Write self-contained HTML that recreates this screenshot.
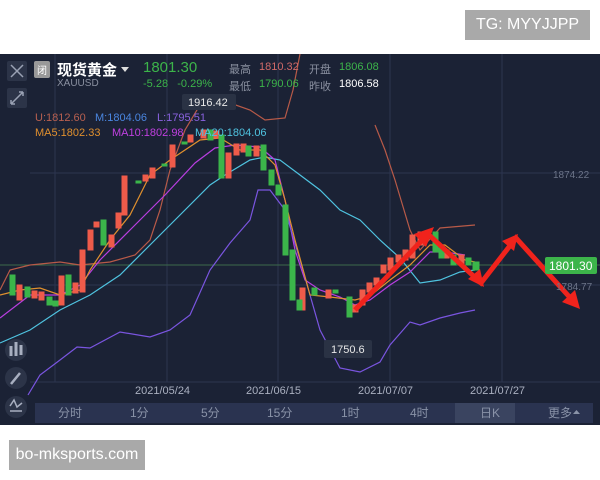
<!DOCTYPE html>
<html><head><meta charset="utf-8"><style>
*{margin:0;padding:0;box-sizing:border-box}
body{width:600px;height:480px;background:#fff;position:relative;overflow:hidden;font-family:"Liberation Sans","Noto Sans CJK SC",sans-serif}
.wm{position:absolute;background:#a9a9a9;color:#fff;font-size:16px;display:flex;align-items:center;justify-content:center}
#panel{position:absolute;left:0;top:54px;width:600px;height:371px;background:#1b2235}
.t{position:absolute;white-space:nowrap;font-size:11px}
</style></head><body>
<div class="wm" style="left:465px;top:10px;width:125px;height:30px">TG: MYYJJPP</div>
<div class="wm" style="left:9px;top:440px;width:136px;height:30px">bo-mksports.com</div>
<div id="panel">
<svg width="600" height="371" viewBox="0 54 600 371" style="position:absolute;left:0;top:0">
<g stroke="#2c3550" stroke-width="1">
<line x1="55" y1="54" x2="55" y2="382"/><line x1="167" y1="54" x2="167" y2="382"/><line x1="278" y1="54" x2="278" y2="382"/><line x1="390" y1="54" x2="390" y2="382"/><line x1="502" y1="54" x2="502" y2="382"/>
<line x1="30" y1="173" x2="600" y2="173"/><line x1="30" y1="285" x2="600" y2="285"/><line x1="30" y1="382" x2="600" y2="382"/>
</g>
<line x1="0" y1="265" x2="600" y2="265" stroke="#3d6b4a" stroke-width="1"/>
<g fill="none" stroke-width="1.2">
<polyline stroke="#b85a48" points="0,290 10,270 30,265 60,262 80,265 110,262 135,255 150,240 160,210 170,170 185,130 200,105 230,103 250,110 265,120 285,118 293,90 300,54"/>
<polyline stroke="#b85a48" points="375,125 385,150 395,180 410,230 420,250 440,228 475,225"/>
<polyline stroke="#4fc3e0" points="0,343 30,330 60,310 90,295 120,275 150,245 180,215 210,185 225,175 250,160 265,157 280,160 300,175 320,190 340,210 360,220 380,240 400,258 420,283 440,280 460,272 475,270"/>
<polyline stroke="#b83ee0" points="0,318 30,295 60,295 80,285 100,260 130,230 165,195 195,163 215,148 235,145 260,147 275,160 285,200 295,250 305,280 320,290 340,297 355,305 370,300 390,285 410,272 430,252 445,252 465,255"/>
<polyline stroke="#7a55e0" points="28,395 40,375 60,360 77,347 90,348 120,332 150,337 170,330 190,315 210,270 230,243 250,220 258,190 270,190 285,210 300,260 320,330 340,368 360,372 380,362 390,345 410,322 420,325 440,318 460,313 475,310"/>
<polyline stroke="#e0902e" points="0,295 20,290 40,288 60,295 80,290 90,270 110,240 130,215 150,175 170,160 200,140 220,138 240,150 260,150 275,165 285,200 295,240 310,295 330,297 355,300 370,296 390,280 410,265 430,245 445,245 465,260 475,262"/>
</g>
<g stroke-width="1">
<g fill="#ef5b4a" stroke="#ef5b4a">
<rect x="17" y="285" width="5" height="15"/><rect x="32" y="291" width="5" height="7"/><rect x="39" y="292" width="5" height="8"/><rect x="59" y="276" width="5" height="29"/><rect x="73" y="283" width="5" height="10"/><rect x="80" y="250" width="5" height="42"/><rect x="88" y="230" width="5" height="20"/><rect x="94" y="222" width="5" height="5"/><rect x="109" y="235" width="5" height="12"/><rect x="116" y="213" width="5" height="15"/><rect x="122" y="176" width="5" height="39"/><rect x="143" y="175" width="5" height="6"/><rect x="150" y="168" width="5" height="10"/><rect x="170" y="145" width="5" height="22"/><rect x="188" y="135" width="5" height="7"/><rect x="201" y="130" width="5" height="8"/><rect x="214" y="131" width="5" height="7"/><rect x="226" y="153" width="5" height="25"/><rect x="234" y="144" width="5" height="11"/><rect x="241" y="144" width="5" height="8"/><rect x="254" y="146" width="5" height="10"/><rect x="300" y="288" width="5" height="22"/><rect x="326" y="290" width="5" height="8"/><rect x="353" y="305" width="5" height="7"/><rect x="360" y="290" width="5" height="15"/><rect x="367" y="283" width="5" height="9"/><rect x="374" y="278" width="5" height="7"/><rect x="381" y="265" width="5" height="8"/><rect x="388" y="258" width="5" height="12"/><rect x="396" y="255" width="5" height="7"/><rect x="403" y="250" width="5" height="10"/><rect x="410" y="235" width="5" height="23"/><rect x="418" y="232" width="5" height="13"/><rect x="444" y="250" width="5" height="8"/><rect x="459" y="255" width="5" height="10"/>
</g>
<g fill="#3bb54a" stroke="#3bb54a">
<rect x="10" y="275" width="5" height="20"/><rect x="25" y="287" width="5" height="10"/><rect x="47" y="297" width="5" height="8"/><rect x="53" y="301" width="5" height="5"/><rect x="66" y="275" width="5" height="20"/><rect x="101" y="220" width="5" height="25"/><rect x="136" y="181" width="5" height="2"/><rect x="162" y="164" width="5" height="2"/><rect x="182" y="142" width="5" height="2"/><rect x="208" y="130" width="5" height="10"/><rect x="219" y="135" width="5" height="43"/><rect x="246" y="146" width="5" height="10"/><rect x="261" y="145" width="5" height="25"/><rect x="269" y="170" width="5" height="15"/><rect x="276" y="185" width="5" height="10"/><rect x="283" y="205" width="5" height="50"/><rect x="290" y="250" width="5" height="50"/><rect x="297" y="300" width="5" height="10"/><rect x="312" y="288" width="5" height="7"/><rect x="333" y="290" width="5" height="3"/><rect x="347" y="297" width="5" height="20"/><rect x="433" y="232" width="5" height="20"/><rect x="439" y="248" width="5" height="10"/><rect x="451" y="255" width="5" height="10"/><rect x="466" y="258" width="5" height="7"/><rect x="473" y="262" width="6" height="8"/>
</g>
</g>
<polyline points="355,310 428,234 481,283 516,238 574,302" stroke="#f0231c" stroke-width="5" fill="none" stroke-linejoin="miter"/>
<g fill="#f0231c">
<polygon points="434,227 414,234 426,247"/><polygon points="518,234 502,241 514,251"/><polygon points="580,309 562,302 575,290"/><polygon points="484,287 468,279 480,269"/>
</g>
<rect x="545" y="257" width="52" height="17" rx="2" fill="#3cb44a"/>
<text x="549" y="270" font-size="12" fill="#fff" font-family="Liberation Sans">1801.30</text>
<text x="553" y="178" font-size="10" fill="#6c7488" font-family="Liberation Sans">1874.22</text>
<text x="556" y="290" font-size="10" fill="#6c7488" font-family="Liberation Sans">1784.77</text>
<rect x="182" y="94" width="54" height="16" rx="2" fill="#2a3244"/>
<text x="188" y="106" font-size="11" fill="#e8e8e8" font-family="Liberation Sans">1916.42</text>
<rect x="324" y="340" width="48" height="18" rx="2" fill="#2a3244"/>
<text x="331" y="353" font-size="11" fill="#e8e8e8" font-family="Liberation Sans">1750.6</text>
<g font-size="11" fill="#aab0c0" font-family="Liberation Sans">
<text x="135" y="394">2021/05/24</text><text x="246" y="394">2021/06/15</text><text x="358" y="394">2021/07/07</text><text x="470" y="394">2021/07/27</text>
</g>
<rect x="7" y="61" width="20" height="20" rx="2" fill="#2c3448"/>
<path d="M11 65 L23 77 M23 65 L11 77" stroke="#9aa2b4" stroke-width="1.5"/>
<rect x="7" y="88" width="20" height="20" rx="2" fill="#2c3448"/>
<path d="M11 104 L23 92 M11 104 h4 M11 104 v-4 M23 92 h-4 M23 92 v4" stroke="#9aa2b4" stroke-width="1.5" fill="none"/>
<circle cx="16" cy="350" r="11" fill="#2c3448"/>
<path d="M11 346v10M16 342v14M21 345v10" stroke="#a8afc0" stroke-width="3"/>
<circle cx="16" cy="378" r="11" fill="#2c3448"/>
<path d="M11 384 L20 373" stroke="#a8afc0" stroke-width="2.5"/>
<circle cx="16" cy="407" r="11" fill="#2c3448"/>
<path d="M10 406 L14 400 L17 407 L22 403 M10 411 H22" stroke="#a8afc0" stroke-width="1.5" fill="none"/>
<rect x="34" y="61" width="16" height="17" rx="2" fill="#999"/>
<text x="37" y="74" font-size="10" fill="#fff" font-family="Noto Sans CJK SC">闭</text>
<polygon points="121,67 129,67 125,72" fill="#ddd"/>
<rect x="35" y="403" width="558" height="20" fill="#2a3350"/>
<rect x="455" y="403" width="60" height="20" fill="#3a4460"/>
<g font-size="12" fill="#8a93a8" font-family="Liberation Sans,Noto Sans CJK SC">
<text x="58" y="417">分时</text><text x="130" y="417">1分</text><text x="201" y="417">5分</text><text x="267" y="417">15分</text><text x="341" y="417">1时</text><text x="410" y="417">4时</text><text x="480" y="417">日K</text><text x="548" y="417">更多</text>
</g>
<polygon points="573,414 580,414 576.5,410" fill="#8a93a8"/>
</svg>
<div class="t" style="left:57px;top:5px;font-size:15px;color:#fff;font-weight:bold">现货黄金</div>
<div class="t" style="left:57px;top:24px;font-size:10px;color:#8a90a0">XAUUSD</div>
<div class="t" style="left:143px;top:5px;font-size:15px;color:#3cb44a">1801.30</div>
<div class="t" style="left:143px;top:24px;color:#3cb44a">-5.28&nbsp;&nbsp;&nbsp;-0.29%</div>
<div class="t" style="left:229px;top:7px;color:#8a90a0">最高</div>
<div class="t" style="left:259px;top:7px;color:#d06a68">1810.32</div>
<div class="t" style="left:229px;top:24px;color:#8a90a0">最低</div>
<div class="t" style="left:259px;top:24px;color:#3cb44a">1790.06</div>
<div class="t" style="left:309px;top:7px;color:#8a90a0">开盘</div>
<div class="t" style="left:339px;top:7px;color:#3cb44a">1806.08</div>
<div class="t" style="left:309px;top:24px;color:#8a90a0">昨收</div>
<div class="t" style="left:339px;top:24px;color:#fff">1806.58</div>
<div class="t" style="left:35px;top:58px;color:#b86050">U:1812.60</div>
<div class="t" style="left:95px;top:58px;color:#4a86e0">M:1804.06</div>
<div class="t" style="left:157px;top:58px;color:#8a62e0">L:1795.51</div>
<div class="t" style="left:35px;top:73px;color:#e0902e">MA5:1802.33</div>
<div class="t" style="left:112px;top:73px;color:#c040e0">MA10:1802.98</div>
<div class="t" style="left:195px;top:73px;color:#4fc3e0">MA20:1804.06</div>
</div>
</body></html>
